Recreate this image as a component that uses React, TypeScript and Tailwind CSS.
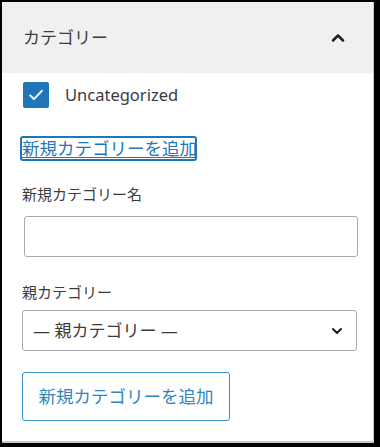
import { ChevronDown, ChevronUp } from "lucide-react";

const font = { fontFamily: '"Noto Sans", "Noto Sans CJK JP", sans-serif' };

export default function App() {
  return (
    <div
      className="h-[447px] w-[380px] bg-black pb-[4px] pl-[2px] pr-[6px] pt-[2px]"
      style={font}
    >
      <div className="flex h-full flex-col border-b-2 border-r border-[#c8c8c8] bg-white">
        <div className="flex h-[71px] shrink-0 items-center justify-between bg-[#f0f0f0] pl-[21px] pr-[25px]">
          <span className="text-[17px] text-[#3c3c3c]">カテゴリー</span>
          <ChevronUp className="h-5 w-5 text-[#1e1e1e]" strokeWidth={3} />
        </div>

        <div className="flex flex-col pl-[20px]">
          <label className="mt-[9px] flex items-center gap-[16px]">
            <span className="ml-[1px] flex h-[26px] w-[26px] items-center justify-center rounded-[2px] bg-[#1f76b8]">
              <svg viewBox="0 0 24 24" className="h-[20px] w-[20px]" fill="none">
                <path d="M5 12.5l4.5 4.5L19 7" stroke="white" strokeWidth="2.4" strokeLinecap="round" strokeLinejoin="round" />
              </svg>
            </span>
            <span className="text-[16.5px] text-[#3c3c3c]">Uncategorized</span>
          </label>

          <a
            href="#"
            className="ml-[-2px] mt-[28px] w-[177px] rounded-[3px] border-2 border-[#1f76b8] text-[17.5px] leading-[21px] whitespace-nowrap text-[#1f76b8] underline underline-offset-2"
          >
            新規カテゴリーを追加
          </a>

          <span className="mt-[22px] text-[15px] leading-[22px] text-[#3c3c3c]">新規カテゴリー名</span>
          <input
            type="text"
            className="ml-[2px] mt-[11px] h-[41px] w-[334px] rounded-[3px] border border-[#a7aaad] bg-white outline-none"
          />

          <span className="mt-[24px] text-[15px] leading-[22px] text-[#3c3c3c]">親カテゴリー</span>
          <div className="mt-[7px] flex h-[41px] w-[335px] items-center justify-between rounded-[3px] border border-[#a7aaad] pl-[10px] pr-[11px]">
            <span className="text-[17px] text-[#3c3c3c]">— 親カテゴリー —</span>
            <ChevronDown className="h-4 w-4 text-[#1e1e1e]" strokeWidth={3} />
          </div>

          <button
            type="button"
            className="mt-[21px] flex h-[49px] w-[208px] items-center justify-center rounded-[3px] border border-[#3a8fcb] text-[17.5px] text-[#2d86c2]"
          >
            新規カテゴリーを追加
          </button>
        </div>
      </div>
    </div>
  );
}
